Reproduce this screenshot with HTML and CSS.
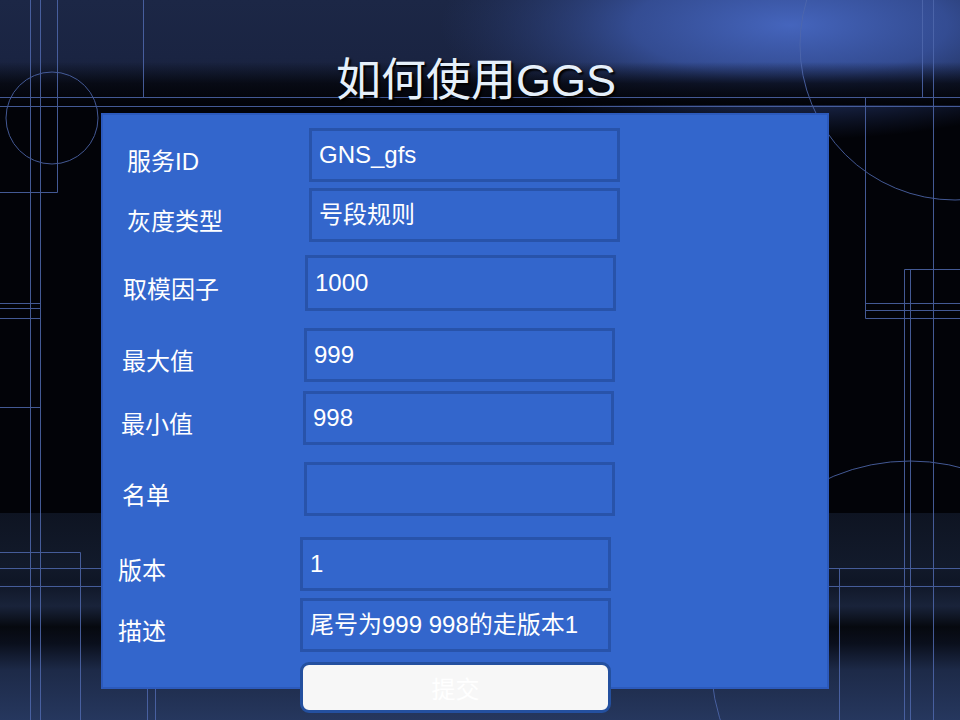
FILE: index.html
```html
<!DOCTYPE html>
<html lang="zh-CN">
<head>
<meta charset="utf-8">
<title>如何使用GGS</title>
<link rel="stylesheet" href="styles.css">
</head>
<body>
<div class="slide">
  <svg class="backdrop" width="960" height="720" viewBox="0 0 960 720" aria-hidden="true">
    <defs>
      <linearGradient id="topGrad" x1="0" y1="0" x2="0" y2="1">
        <stop offset="0" stop-color="#1c2746"/>
        <stop offset="0.55" stop-color="#1a2442"/>
        <stop offset="1" stop-color="#151e36"/>
      </linearGradient>
      <radialGradient id="glow" cx="0.5" cy="0.5" r="0.5">
        <stop offset="0" stop-color="#4565bd" stop-opacity="1"/>
        <stop offset="0.45" stop-color="#3a56a6" stop-opacity="0.8"/>
        <stop offset="1" stop-color="#2a3e78" stop-opacity="0"/>
      </radialGradient>
      <linearGradient id="fade" x1="0" y1="0" x2="0" y2="1">
        <stop offset="0" stop-color="#020308" stop-opacity="0"/>
        <stop offset="0.5" stop-color="#020308" stop-opacity="0.75"/>
        <stop offset="1" stop-color="#020308" stop-opacity="1"/>
      </linearGradient>
      <linearGradient id="botGrad" x1="0" y1="0" x2="0" y2="1">
        <stop offset="0" stop-color="#0e1422"/>
        <stop offset="0.25" stop-color="#121a2b"/>
        <stop offset="0.33" stop-color="#0f1626"/>
        <stop offset="0.45" stop-color="#19233a"/>
        <stop offset="0.55" stop-color="#06090f"/>
        <stop offset="0.63" stop-color="#0a0f1c"/>
        <stop offset="0.76" stop-color="#1d2a48"/>
        <stop offset="1" stop-color="#26375e"/>
      </linearGradient>
    </defs>
    <rect x="0" y="0" width="960" height="720" fill="#020308"/>
    <rect x="0" y="0" width="960" height="104" fill="url(#topGrad)"/>
    <ellipse cx="790" cy="25" rx="350" ry="115" fill="url(#glow)"/>
    <rect x="0" y="62" width="960" height="43" fill="url(#fade)"/>
    <rect x="0" y="513" width="960" height="207" fill="url(#botGrad)"/>
    <g fill="none" stroke="#4f68ad" stroke-width="1" opacity="0.85">
      <line x1="0" y1="97.5" x2="960" y2="97.5"/>
      <line x1="0" y1="106.5" x2="960" y2="106.5"/>
      <line x1="30.5" y1="0" x2="30.5" y2="720"/>
      <line x1="40.5" y1="0" x2="40.5" y2="720"/>
      <line x1="57.5" y1="0" x2="57.5" y2="192.5"/>
      <line x1="0" y1="192.5" x2="57.5" y2="192.5"/>
      <line x1="143.5" y1="0" x2="143.5" y2="97.5"/>
      <circle cx="52" cy="118" r="46"/>
      <line x1="0" y1="303.5" x2="40.5" y2="303.5"/>
      <line x1="0" y1="308.5" x2="40.5" y2="308.5"/>
      <line x1="0" y1="318.5" x2="40.5" y2="318.5"/>
      <line x1="0" y1="407.5" x2="40.5" y2="407.5"/>
      <line x1="80.5" y1="552.5" x2="80.5" y2="720"/>
      <line x1="0" y1="552.5" x2="80.5" y2="552.5"/>
      <line x1="0" y1="568.5" x2="960" y2="568.5"/>
      <line x1="0" y1="586.5" x2="960" y2="586.5"/>
      <line x1="147.5" y1="600" x2="147.5" y2="720"/>
      <line x1="155.5" y1="600" x2="155.5" y2="720"/>
      <line x1="922.5" y1="0" x2="922.5" y2="97.5"/>
      <line x1="933.5" y1="0" x2="933.5" y2="720"/>
      <line x1="865.5" y1="97.5" x2="865.5" y2="318.5"/>
      <line x1="865.5" y1="303.5" x2="960" y2="303.5"/>
      <line x1="865.5" y1="310.5" x2="960" y2="310.5"/>
      <line x1="865.5" y1="318.5" x2="960" y2="318.5"/>
      <line x1="904.5" y1="269.5" x2="904.5" y2="720"/>
      <line x1="910.5" y1="269.5" x2="910.5" y2="720"/>
      <line x1="904.5" y1="269.5" x2="960" y2="269.5"/>
      <line x1="839.5" y1="568.5" x2="839.5" y2="720"/>
      <circle cx="955" cy="45" r="155"/>
      <circle cx="910" cy="660" r="199"/>
    </g>
  </svg>

  <h1 class="title">如何使用GGS</h1>

  <section class="panel">
    <div class="row f1"><span class="label">服务ID</span><div class="field">GNS_gfs</div></div>
    <div class="row f2"><span class="label">灰度类型</span><div class="field">号段规则</div></div>
    <div class="row f3"><span class="label">取模因子</span><div class="field field--tall">1000</div></div>
    <div class="row f4"><span class="label">最大值</span><div class="field">999</div></div>
    <div class="row f5"><span class="label">最小值</span><div class="field">998</div></div>
    <div class="row f6"><span class="label">名单</span><div class="field"></div></div>
    <div class="row f7"><span class="label">版本</span><div class="field">1</div></div>
    <div class="row f8"><span class="label">描述</span><div class="field">尾号为999 998的走版本1</div></div>
    <button class="submit" type="button">提交</button>
  </section>
</div>
</body>
</html>
```

FILE: styles.css
```css
* { box-sizing: border-box; }

html, body {
  margin: 0;
  padding: 0;
  background: #020308;
}

.slide {
  position: relative;
  width: 960px;
  height: 720px;
  overflow: hidden;
  font-family: "Liberation Sans", "Noto Sans CJK SC", sans-serif;
  color: #ffffff;
}

.backdrop {
  position: absolute;
  left: 0;
  top: 0;
  z-index: 0;
}

.title {
  position: relative;
  z-index: 1;
  margin: 0;
  padding: 58px 8px 0 0;
  height: 113px;
  font-size: 45px;
  line-height: 45px;
  font-weight: normal;
  text-align: center;
  color: #e6f0fa;
  text-shadow: 2px 2px 2px #000000;
}

.panel {
  position: relative;
  z-index: 1;
  margin-left: 101px;
  width: 728px;
  height: 576px;
  background: #3366cc;
  border: 2px solid #2c5abc;
  display: flex;
  flex-direction: column;
  align-items: flex-start;
}

.row {
  display: flex;
  align-items: center;
}

.label {
  width: 182px;
  padding-top: 14px;
  font-size: 24px;
  line-height: 24px;
  color: #ffffff;
}

.field {
  width: 311px;
  height: 54px;
  border: 3px solid #2853aa;
  background: #3366cc;
  padding-left: 7px;
  display: flex;
  align-items: center;
  font-size: 24px;
  line-height: 24px;
  color: #ffffff;
  white-space: nowrap;
}

.field--tall { height: 56px; }

.f1 { margin-top: 13px; margin-left: 24px; }
.f2 { margin-top: 6px;  margin-left: 24px; }
.f3 { margin-top: 13px; margin-left: 20px; }
.f4 { margin-top: 17px; margin-left: 19px; }
.f5 { margin-top: 9px;  margin-left: 18px; }
.f6 { margin-top: 17px; margin-left: 19px; }
.f7 { margin-top: 21px; margin-left: 15px; }
.f8 { margin-top: 7px;  margin-left: 15px; }

.submit {
  margin-top: 10px;
  margin-left: 197px;
  width: 311px;
  height: 51px;
  flex: none;
  border: 3px solid #24509f;
  border-radius: 9px;
  background: #f7f7f7;
  color: #ffffff;
  font-family: "Noto Sans CJK SC", sans-serif;
  font-size: 24px;
  line-height: 24px;
  padding: 0;
}
```
